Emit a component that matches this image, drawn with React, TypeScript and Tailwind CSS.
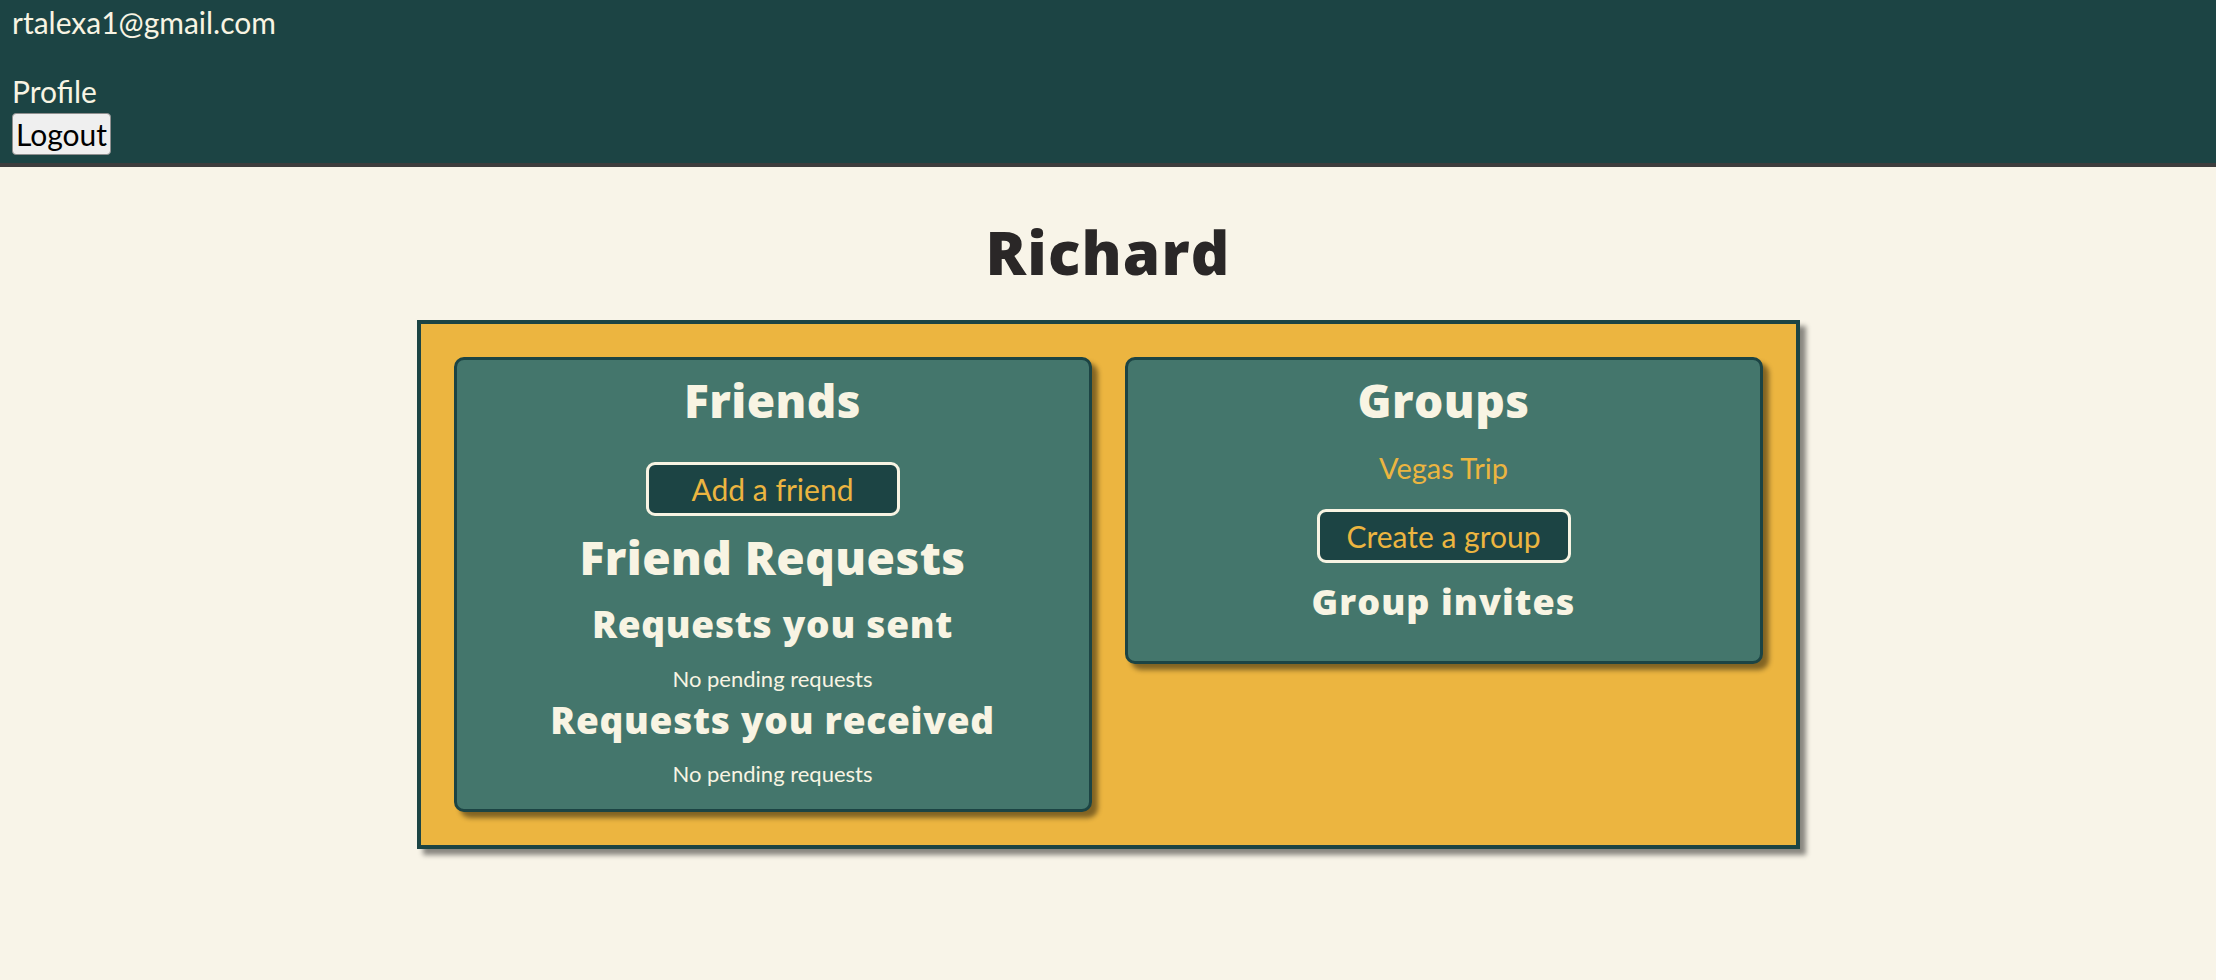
import React from "react";

function Card({ children, className }: { children: React.ReactNode; className?: string }) {
  return (
    <div
      className={
        "flex w-[638px] flex-col items-center rounded-[10px] border-[3px] border-[#1c4444] bg-[#44766c] text-[#f8f4e3] shadow-[6px_6px_5px_rgba(0,0,0,0.45)] " +
        (className || "")
      }
    >
      {children}
    </div>
  );
}

function CardButton({ label, className }: { label: string; className?: string }) {
  return (
    <button
      type="button"
      className={
        "flex h-[54px] w-[254px] items-center justify-center rounded-[9px] border-[3px] border-[#f8f4e3] bg-[#1c4444] text-[30px] leading-none text-[#ecb540] " +
        (className || "")
      }
    >
      {label}
    </button>
  );
}

const heading = "font-['Open_Sans',sans-serif] font-extrabold leading-none";

export default function App() {
  return (
    <div className="min-h-[980px] bg-[#f8f4e8] font-['Lato',sans-serif]">
      <header className="h-[167px] border-b-4 border-[#3d3d3d] bg-[#1c4444] px-3 pt-[5px] text-[30px] text-[#f8f4e3]">
        <p className="leading-[35px]">rtalexa1@gmail.com</p>
        <p className="mt-[34px] leading-[35px]">
          <a href="#">Profile</a>
        </p>
        <button
          type="button"
          className="mt-[4px] h-[42px] rounded-[4px] border border-[#8f8f8f] bg-[#efefef] px-[3px] text-[30px] leading-none text-black"
        >
          Logout
        </button>
      </header>

      <h1 className={"mt-[55px] text-center text-[60px] tracking-[0.02em] text-[#2a2727] " + heading}>
        Richard
      </h1>

      <div className="mx-auto mt-[38px] flex w-[1383px] items-start gap-[33px] border-4 border-[#1c4444] bg-[#ecb540] p-[33px] shadow-[6px_6px_5px_rgba(0,0,0,0.45)]">
        <Card className="pb-[24px]">
          <h2 className={"mt-[17px] text-[46px] tracking-[0.01em] " + heading}>Friends</h2>
          <CardButton label="Add a friend" className="mt-[39px]" />
          <h2 className={"mt-[18px] text-[46px] tracking-[0.01em] " + heading}>Friend Requests</h2>
          <h3 className={"mt-[25px] text-[37px] tracking-[0.02em] " + heading}>Requests you sent</h3>
          <p className="mt-[26px] text-[22px] leading-none">No pending requests</p>
          <h3 className={"mt-[11px] text-[37px] tracking-[0.02em] " + heading}>Requests you received</h3>
          <p className="mt-[25px] text-[22px] leading-none">No pending requests</p>
        </Card>

        <Card className="pb-[41px]">
          <h2 className={"mt-[17px] text-[46px] tracking-[0.01em] " + heading}>Groups</h2>
          <a href="#" className="mt-[30px] text-[29px] leading-none text-[#ecb540]">
            Vegas Trip
          </a>
          <CardButton label="Create a group" className="mt-[27px]" />
          <h3 className={"mt-[21px] text-[36px] tracking-[0.03em] " + heading}>Group invites</h3>
        </Card>
      </div>
    </div>
  );
}
